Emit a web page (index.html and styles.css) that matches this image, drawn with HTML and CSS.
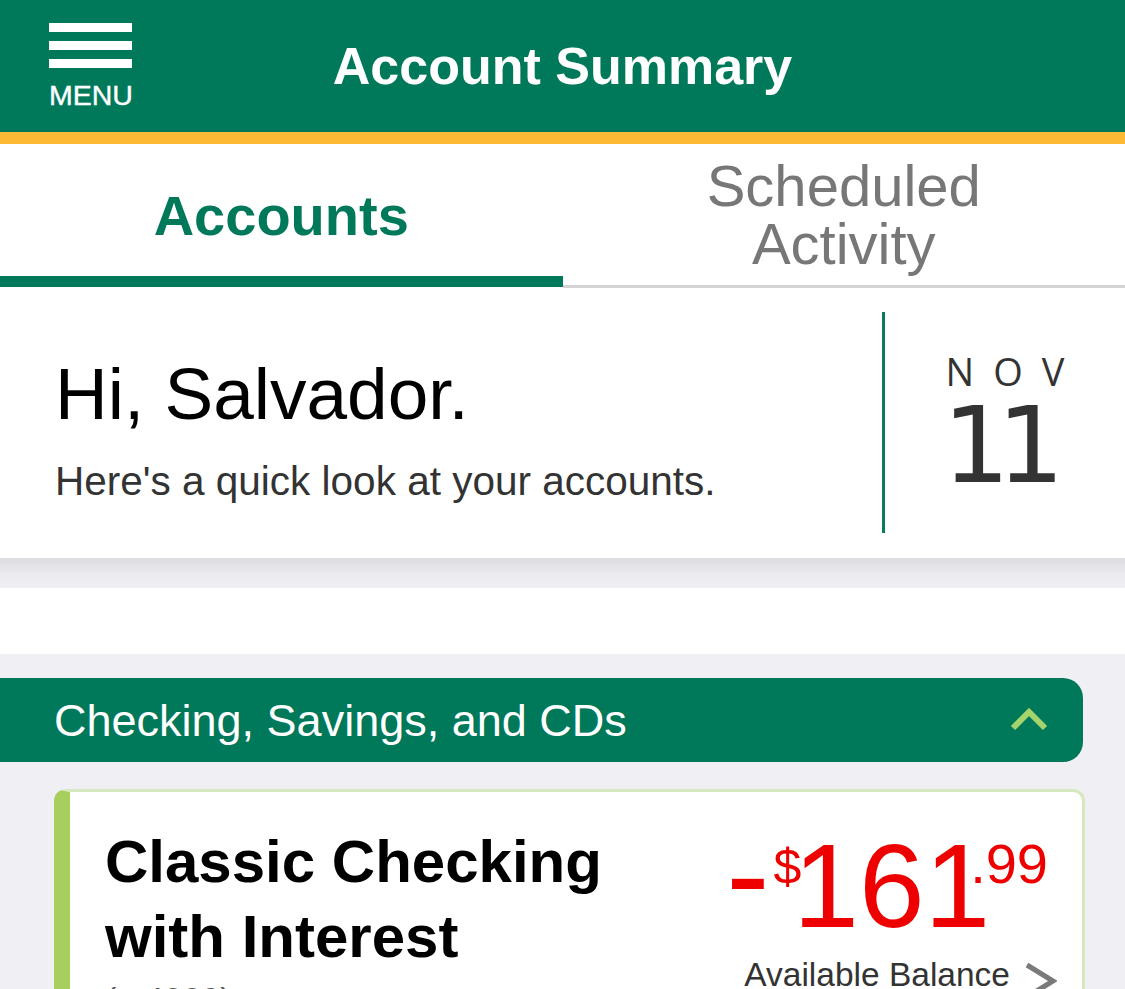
FILE: index.html
```html
<!DOCTYPE html>
<html lang="en">
<head>
<meta charset="utf-8">
<title>Account Summary</title>
<link rel="stylesheet" href="styles.css">
</head>
<body>
<header class="topbar">
  <div class="menu">
    <div class="bars"><span></span><span></span><span></span></div>
    <div class="menu-label">MENU</div>
  </div>
  <h1 class="title">Account Summary</h1>
  <div class="spacer"></div>
</header>

<nav class="tabs">
  <div class="tab tab-active">Accounts</div>
  <div class="tab tab-idle">Scheduled<br>Activity</div>
</nav>

<section class="greeting">
  <div class="greet-text">
    <div class="hello">Hi, Salvador.</div>
    <div class="sub">Here's a quick look at your accounts.</div>
  </div>
  <div class="divider"></div>
  <div class="date">
    <div class="month">NOV</div>
    <div class="day">11</div>
  </div>
</section>

<div class="shadow-gap"></div>
<div class="white-gap"></div>

<main class="accounts">
  <div class="group-head">
    <span class="group-title">Checking, Savings, and CDs</span>
    <svg class="up" width="38" height="26" viewBox="0 0 38 26"><polyline points="3,22 19,6 35,22" fill="none" stroke="#a6d46c" stroke-width="6"/></svg>
  </div>
  <div class="acct-card">
    <div class="acct-name">
      <div class="name">Classic Checking with Interest</div>
      <div class="acct-num">(...4829)</div>
    </div>
    <div class="acct-bal">
      <div class="amount"><span class="neg">-</span><span class="cur">$</span><span class="whole">161</span><span class="cents">.99</span></div>
      <div class="bal-label"><span>Available Balance</span><svg class="go" width="34" height="38" viewBox="0 0 34 38"><polyline points="4,3 30,19 4,35" fill="none" stroke="#7a7a7a" stroke-width="5"/></svg></div>
    </div>
  </div>
</main>
</body>
</html>
```

FILE: styles.css
```css
* { box-sizing: border-box; }
html, body { margin: 0; padding: 0; }
body {
  width: 1125px;
  background: #ffffff;
  font-family: "Liberation Sans", Arial, sans-serif;
  overflow: hidden;
}

/* header */
.topbar {
  height: 144px;
  background: #00785a;
  border-bottom: 12px solid #fdb933;
  display: grid;
  grid-template-columns: 1fr auto 1fr;
  align-items: start;
}
.menu {
  padding-left: 49px;
  padding-top: 23px;
  width: 180px;
}
.bars {
  width: 83px;
  display: flex;
  flex-direction: column;
  gap: 9px;
}
.bars span {
  display: block;
  height: 9px;
  background: #ffffff;
}
.menu-label {
  color: #ffffff;
  font-size: 28.5px;
  line-height: 28px;
  margin-top: 13px;
  width: 84px;
  -webkit-text-stroke: 0.4px #ffffff;
}
.title {
  margin: 0;
  color: #ffffff;
  font-size: 52px;
  font-weight: 700;
  line-height: 52px;
  padding-top: 40px;
  white-space: nowrap;
}

/* tabs */
.tabs {
  display: flex;
  align-items: flex-start;
}
.tab {
  width: 50%;
  text-align: center;
}
.tab-active {
  height: 143px;
  color: #00785a;
  font-weight: 700;
  font-size: 56px;
  line-height: 56px;
  padding-top: 44px;
  border-bottom: 11px solid #00785a;
}
.tab-idle {
  height: 144px;
  color: #777777;
  font-size: 58px;
  line-height: 58px;
  padding-top: 13px;
  border-bottom: 3px solid #d4d4d4;
}

/* greeting */
.greeting {
  height: 270px;
  display: flex;
  align-items: stretch;
  padding: 24px 0 25px;
  background: #ffffff;
}
.greet-text {
  flex: 1;
  padding-left: 55px;
  padding-top: 45px;
}
.hello {
  font-size: 73px;
  line-height: 73px;
  color: #000000;
}
.sub {
  margin-top: 31px;
  font-size: 40.5px;
  line-height: 40px;
  color: #333333;
}
.divider {
  width: 3px;
  background: #0b7a5c;
}
.date {
  width: 240px;
  text-align: center;
  color: #333333;
  padding-top: 40px;
}
.month {
  font-family: "Open Sans", "Liberation Sans", sans-serif;
  font-size: 38px;
  line-height: 38px;
  letter-spacing: 19px;
  padding-left: 19px;
}
.day {
  font-family: "DejaVu Sans", sans-serif;
  font-size: 106px;
  line-height: 106px;
  letter-spacing: -13px;
  margin-top: 3px;
  padding-right: 16px;
}

.shadow-gap {
  height: 30px;
  background: linear-gradient(#dcdce1, #ebebf0 60%, #efeff4);
}
.white-gap {
  height: 66px;
  background: #ffffff;
}

/* accounts */
.accounts {
  background: #efeff4;
  padding-top: 24px;
  min-height: 400px;
}
.group-head {
  height: 84px;
  margin-right: 42px;
  background: #00785a;
  border-radius: 0 20px 20px 0;
  display: flex;
  align-items: center;
  justify-content: space-between;
  padding: 0 35px 0 54px;
}
.group-title {
  color: #ffffff;
  font-size: 45px;
  line-height: 45px;
}
.up { display: block; margin-top: -2px; }

.acct-card {
  margin: 27px 40px 0 54px;
  background: #ffffff;
  border: 3px solid #d7e8bf;
  border-left: 16px solid #a6cf5e;
  border-radius: 12px 12px 0 0;
  display: flex;
  justify-content: space-between;
  padding: 32px 25px 0 35px;
}
.acct-name { width: 560px; }
.name {
  font-size: 60px;
  font-weight: 700;
  line-height: 75px;
  color: #000000;
}
.acct-num {
  margin-top: 8px;
  font-size: 34px;
  line-height: 34px;
  color: #555555;
}
.acct-bal {
  display: flex;
  flex-direction: column;
  align-items: flex-end;
  padding-top: 3px;
}
.amount {
  display: flex;
  align-items: flex-start;
  color: #ee0000;
  margin-right: 9px;
}
.neg {
  font-size: 130px;
  line-height: 130px;
  margin-top: -19px;
  margin-right: 4px;
}
.cur {
  font-size: 50px;
  line-height: 50px;
  margin-top: 15px;
}
.whole {
  font-size: 118px;
  line-height: 118px;
  margin-left: -8px;
}
.cents {
  font-size: 56px;
  line-height: 56px;
  margin-top: 9px;
  margin-left: -20px;
}
.bal-label {
  display: flex;
  align-items: flex-start;
  gap: 13px;
  margin-top: 13px;
  font-size: 33.5px;
  line-height: 34px;
  color: #333333;
}
.go { display: block; margin-top: 4px; }
```
